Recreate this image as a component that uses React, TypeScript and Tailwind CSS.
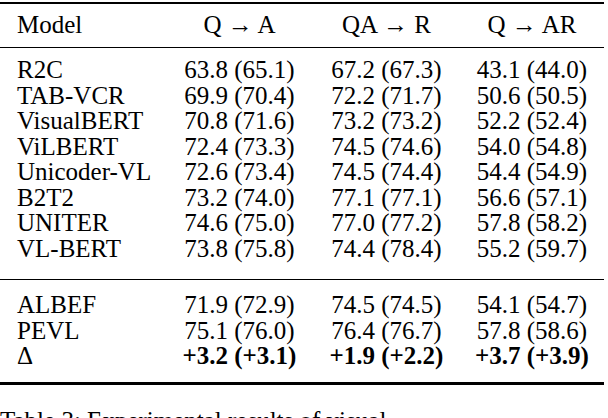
const head = ['Q → A', 'QA → R', 'Q → AR'];

const baselines: [string, string, string, string][] = [
  ['R2C', '63.8 (65.1)', '67.2 (67.3)', '43.1 (44.0)'],
  ['TAB-VCR', '69.9 (70.4)', '72.2 (71.7)', '50.6 (50.5)'],
  ['VisualBERT', '70.8 (71.6)', '73.2 (73.2)', '52.2 (52.4)'],
  ['ViLBERT', '72.4 (73.3)', '74.5 (74.6)', '54.0 (54.8)'],
  ['Unicoder-VL', '72.6 (73.4)', '74.5 (74.4)', '54.4 (54.9)'],
  ['B2T2', '73.2 (74.0)', '77.1 (77.1)', '56.6 (57.1)'],
  ['UNITER', '74.6 (75.0)', '77.0 (77.2)', '57.8 (58.2)'],
  ['VL-BERT', '73.8 (75.8)', '74.4 (78.4)', '55.2 (59.7)'],
];

const ours: [string, string, string, string][] = [
  ['ALBEF', '71.9 (72.9)', '74.5 (74.5)', '54.1 (54.7)'],
  ['PEVL', '75.1 (76.0)', '76.4 (76.7)', '57.8 (58.6)'],
  ['Δ', '+3.2 (+3.1)', '+1.9 (+2.2)', '+3.7 (+3.9)'],
];

const Row = ({ cells, bold }: { cells: string[]; bold?: boolean }) => (
  <div className="grid grid-cols-[166px_147px_147px_144px] h-[25.5px] leading-[25.5px]">
    <div className="pl-[17px]">{cells[0]}</div>
    {cells.slice(1).map((c, i) => (
      <div key={i} className={bold ? 'text-center font-bold' : 'text-center'}>
        {c}
      </div>
    ))}
  </div>
);

export default function App() {
  return (
    <div className="w-[608px] h-[418px] bg-white text-black overflow-hidden text-[25px] font-['Liberation_Serif','Times_New_Roman',serif]">
      <div className="w-[604px] mt-[2px] border-t-2 border-b-[3px] border-black">
        <div className="grid grid-cols-[166px_147px_147px_144px] h-[25px] leading-[25px] mt-[8px] mb-[10px]">
          <div className="pl-[17px]">Model</div>
          {head.map((h) => (
            <div key={h} className="text-center">
              {h}
            </div>
          ))}
        </div>
        <div className="border-t border-black pt-[9px] pb-[18px]">
          {baselines.map((r) => (
            <Row key={r[0]} cells={r} />
          ))}
        </div>
        <div className="border-t border-black pt-[12px] pb-[13px]">
          {ours.map((r) => (
            <Row key={r[0]} cells={r} bold={r[0] === 'Δ'} />
          ))}
        </div>
      </div>
      <div className="mt-[23px] leading-[25px] whitespace-nowrap">
        Table 3: Experimental results of visual
      </div>
    </div>
  );
}
